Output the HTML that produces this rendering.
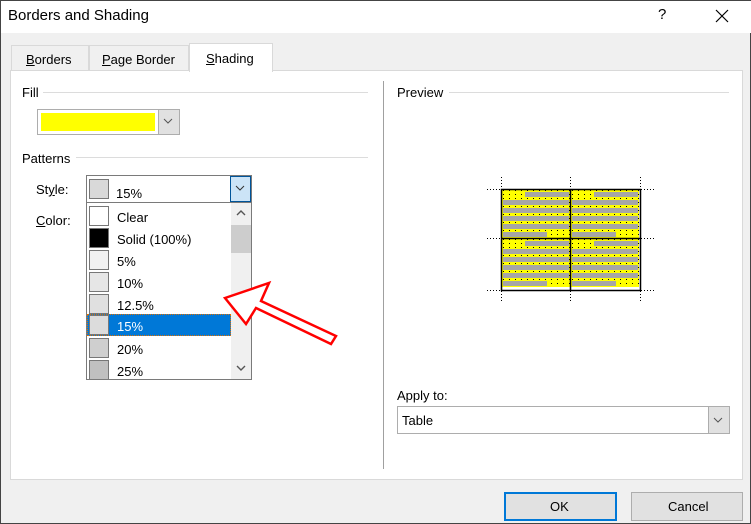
<!DOCTYPE html>
<html><head><style>
*{margin:0;padding:0;box-sizing:border-box}
body{width:751px;height:524px;background:#f0f0f0;font-family:"Liberation Sans",sans-serif;font-size:13px;color:#000;position:relative;overflow:hidden;border:1px solid #444}
.a{position:absolute}
.t{position:absolute;white-space:nowrap}
.line{position:absolute;height:1px;background:#dcdcdc}
.sw{position:absolute;left:2px;width:20px;height:20px;border:1px solid #777}
.it{position:absolute;left:0;width:144px;height:22px}
.it span{position:absolute;left:30px;top:5px}
</style></head><body>
<div class="a" style="left:0;top:0;width:751px;height:32px;background:#fff"></div>
<div class="t" style="left:7px;top:6px;font-size:15px">Borders and Shading</div>
<div class="t" style="left:657px;top:5px;font-size:15px">?</div>
<svg class="a" style="left:714px;top:8px" width="14" height="14"><path d="M1 1L13 13M13 1L1 13" stroke="#000" stroke-width="1.2"/></svg>
<!-- tabs -->
<div class="a" style="left:10px;top:44px;width:78px;height:26px;border:1px solid #d9d9d9;border-bottom:none;background:#f0f0f0"></div>
<div class="t" style="left:25px;top:51px"><u>B</u>orders</div>
<div class="a" style="left:88px;top:44px;width:100px;height:26px;border:1px solid #d9d9d9;border-bottom:none;background:#f0f0f0"></div>
<div class="t" style="left:101px;top:51px"><u>P</u>age Border</div>
<div class="a" style="left:9px;top:69px;width:733px;height:410px;background:#fff;border:1px solid #d9d9d9"></div>
<div class="a" style="left:188px;top:42px;width:84px;height:29px;border:1px solid #d9d9d9;border-bottom:none;background:#fff"></div>
<div class="t" style="left:205px;top:50px"><u>S</u>hading</div>
<!-- fill -->
<div class="t" style="left:21px;top:84px">Fill</div>
<div class="line" style="left:42px;top:91px;width:325px"></div>
<div class="a" style="left:36px;top:108px;width:143px;height:26px;border:1px solid #adadad;background:#fff"></div>
<div class="a" style="left:40px;top:112px;width:114px;height:18px;background:#ff0"></div>
<div class="a" style="left:157px;top:109px;width:21px;height:24px;background:#e1e1e1;border-left:1px solid #adadad"></div>
<svg class="a" style="left:162px;top:117px" width="10" height="6"><path d="M1 1L5 5L9 1" stroke="#555" fill="none"/></svg>
<div class="t" style="left:21px;top:150px">Patterns</div>
<div class="line" style="left:75px;top:156px;width:292px"></div>
<div class="t" style="left:35px;top:181px">St<u>y</u>le:</div>
<div class="t" style="left:35px;top:212px"><u>C</u>olor:</div>
<div class="a" style="left:85px;top:174px;width:166px;height:28px;border:1px solid #7a7a7a;background:#fff"></div>
<div class="a" style="left:88px;top:178px;width:20px;height:20px;border:1px solid #777;background:#d9d9d9"></div>
<div class="t" style="left:115px;top:185px">15%</div>
<div class="a" style="left:229px;top:175px;width:21px;height:26px;background:#cce4f7;border:1px solid #005499"></div>
<svg class="a" style="left:234px;top:184px" width="10" height="6"><path d="M1 1L5 5L9 1" stroke="#333" fill="none"/></svg>
<!-- list -->
<div class="a" style="left:85px;top:201px;width:166px;height:178px;border:1px solid #7a7a7a;background:#fff;overflow:hidden">
 <div class="it" style="top:2px"><div class="sw" style="top:1px;background:#fff"></div><span>Clear</span></div>
 <div class="it" style="top:24px"><div class="sw" style="top:1px;background:#000"></div><span>Solid (100%)</span></div>
 <div class="it" style="top:46px"><div class="sw" style="top:1px;background:#f2f2f2"></div><span>5%</span></div>
 <div class="it" style="top:68px"><div class="sw" style="top:1px;background:#e6e6e6"></div><span>10%</span></div>
 <div class="it" style="top:90px"><div class="sw" style="top:1px;background:#e0e0e0"></div><span>12.5%</span></div>
 <div class="it" style="top:111px;background:#0078d7;color:#fff;outline:1px dotted #e07000;outline-offset:-1px"><div class="sw" style="top:1px;background:#dcdcdc"></div><span>15%</span></div>
 <div class="it" style="top:134px"><div class="sw" style="top:1px;background:#cfcfcf"></div><span>20%</span></div>
 <div class="it" style="top:156px"><div class="sw" style="top:1px;background:#c0c0c0"></div><span>25%</span></div>
 <div class="a" style="left:144px;top:0;width:20px;height:178px;background:#f0f0f0"></div>
 <div class="a" style="left:144px;top:22px;width:20px;height:28px;background:#cdcdcd"></div>
 <svg class="a" style="left:149px;top:7px" width="10" height="6"><path d="M1 5L5 1L9 5" stroke="#555" fill="none" stroke-width="1.4"/></svg>
 <svg class="a" style="left:149px;top:162px" width="10" height="6"><path d="M1 1L5 5L9 1" stroke="#555" fill="none" stroke-width="1.4"/></svg>
</div>
<!-- arrow -->
<svg class="a" style="left:215px;top:275px" width="130" height="80"><path d="M9 22L53 7L45 25L120 60L115 68L40 32L30 48Z" fill="#fff" stroke="#f00" stroke-width="2.5" stroke-linejoin="miter"/></svg>
<!-- preview -->
<div class="a" style="left:382px;top:80px;width:1px;height:388px;background:#a0a0a0"></div>
<div class="t" style="left:396px;top:84px">Preview</div>
<div class="line" style="left:448px;top:91px;width:280px"></div>
<svg class="a" style="left:480px;top:176px" width="180" height="126">
<defs>
<pattern id="d" width="6" height="4" patternUnits="userSpaceOnUse"><rect x="2" y="1" width="1" height="1" fill="#000"/></pattern>
<g id="c">
<rect width="69" height="49" fill="#ff0"/><rect width="69" height="49" fill="url(#d)"/>
<rect x="24" y="3" width="44" height="5" fill="#a6a6a6"/>
<rect x="2" y="11" width="66" height="5" fill="#a6a6a6"/>
<rect x="2" y="19" width="66" height="5" fill="#a6a6a6"/>
<rect x="2" y="27" width="66" height="5" fill="#a6a6a6"/>
<rect x="2" y="35" width="66" height="5" fill="#a6a6a6"/>
<rect x="2" y="43" width="44" height="5" fill="#a6a6a6"/>
</g></defs>
<use href="#c" x="20" y="12"/><use href="#c" x="89" y="12"/>
<use href="#c" x="20" y="61"/><use href="#c" x="89" y="61"/>
<rect x="20.5" y="12.5" width="139" height="101" fill="none" stroke="#000" stroke-width="1.5"/>
<path d="M89.5 12V114M20 61.5H160" stroke="#000" stroke-width="1.5"/>
<path d="M6 12.5H20M160 12.5H174M6 61.5H20M160 61.5H174M6 113.5H20M160 113.5H174M20.5 0V12M159.5 0V12M20.5 114V126M159.5 114V126M89.5 0V12M89.5 114V126" stroke="#000" stroke-dasharray="1 2"/>
</svg>
<div class="t" style="left:396px;top:387px">Apply to:</div>
<div class="a" style="left:396px;top:405px;width:333px;height:28px;border:1px solid #adadad;background:#fff"></div>
<div class="t" style="left:401px;top:412px">Table</div>
<div class="a" style="left:707px;top:406px;width:21px;height:26px;background:#e1e1e1;border-left:1px solid #adadad"></div>
<svg class="a" style="left:712px;top:416px" width="10" height="6"><path d="M1 1L5 5L9 1" stroke="#555" fill="none"/></svg>
<!-- buttons -->
<div class="a" style="left:503px;top:491px;width:113px;height:29px;background:#e1e1e1;border:2px solid #0078d7"></div>
<div class="t" style="left:549px;top:498px">OK</div>
<div class="a" style="left:630px;top:491px;width:112px;height:29px;background:#e1e1e1;border:1px solid #adadad"></div>
<div class="t" style="left:667px;top:498px">Cancel</div>
</body></html>
